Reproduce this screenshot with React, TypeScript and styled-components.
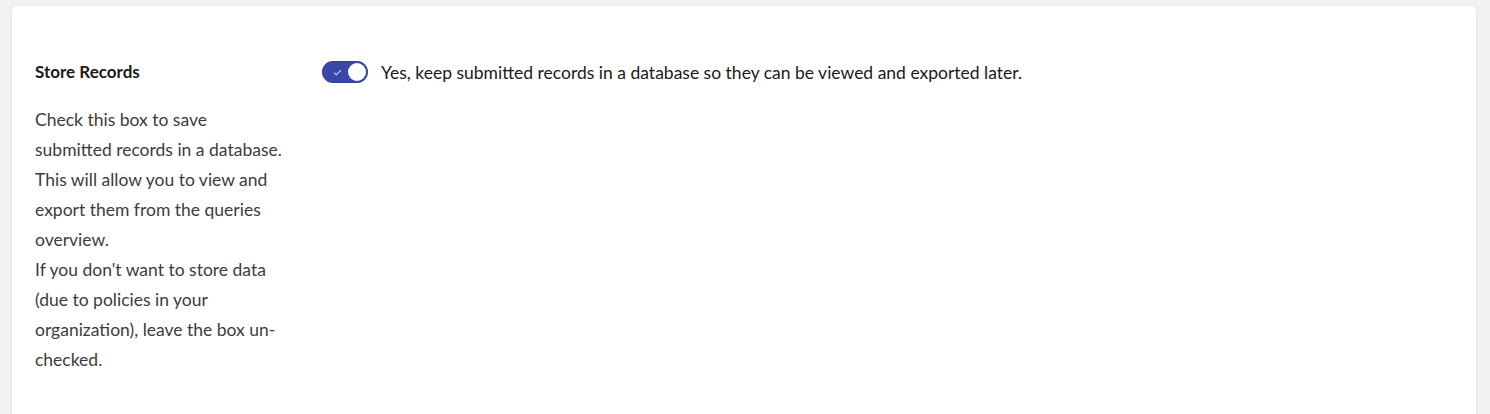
import React from 'react';
import styled, { createGlobalStyle } from 'styled-components';

const GlobalStyle = createGlobalStyle`
  body {
    margin: 0;
    background: #f1f1f4;
    font-family: Lato, "Open Sans", sans-serif;
  }
`;

function App() {
  const [checked, setChecked] = React.useState(true);

  return (
    <Page>
      <GlobalStyle />
      <Card>
        <SettingRow>
          <Info>
            <Label>Store Records</Label>
            <Help>
              Check this box to save submitted records in a database. This will allow you to view and export them
              from the queries overview.
              <br />
              If you don't want to store data (due to policies in your organization), leave the box un-checked.
            </Help>
          </Info>
          <Control>
            <Switch type="button" $on={checked} onClick={() => setChecked(!checked)} aria-pressed={checked}>
              <Check viewBox="0 0 10 8">
                <path d="M1 4.2 L3.6 6.6 L9 1.2" />
              </Check>
              <Knob $on={checked} />
            </Switch>
            <SwitchText>Yes, keep submitted records in a database so they can be viewed and exported later.</SwitchText>
          </Control>
        </SettingRow>
      </Card>
    </Page>
  );
}

const Page = styled.div`
  padding: 6px 14px 0 12px;
  height: 414px;
  box-sizing: border-box;
  overflow: hidden;
`;

const Card = styled.div`
  background: #fff;
  border-radius: 5px;
  box-shadow: 0 1px 3px rgba(0, 0, 0, 0.12);
  padding: 55px 23px 40px;
  min-height: 420px;
  box-sizing: border-box;
`;

const SettingRow = styled.div`
  display: grid;
  grid-template-columns: 249px 1fr;
  column-gap: 38px;
`;

const Info = styled.div`
  display: flex;
  flex-direction: column;
  gap: 22px;
`;

const Label = styled.div`
  font-size: 17px;
  font-weight: 700;
  line-height: 22px;
  color: #1a1a1a;
`;

const Help = styled.p`
  margin: 0;
  font-size: 17.5px;
  line-height: 30px;
  color: #3c3c3c;
`;

const Control = styled.div`
  display: flex;
  align-items: center;
  gap: 13px;
  height: 22px;
`;

const Switch = styled.button<{ $on: boolean }>`
  position: relative;
  flex: none;
  width: 46px;
  height: 22px;
  padding: 0;
  border: none;
  border-radius: 11px;
  background: ${(p) => (p.$on ? '#3a46a8' : '#c4c4cc')};
  box-shadow: inset 0 0 0 1px rgba(0, 0, 0, 0.08);
  cursor: pointer;
`;

const Check = styled.svg`
  position: absolute;
  left: 11px;
  top: 8px;
  width: 9px;
  height: 7px;
  fill: none;
  stroke: #c9cbe6;
  stroke-width: 1.3;
`;

const Knob = styled.span<{ $on: boolean }>`
  position: absolute;
  top: 2px;
  left: ${(p) => (p.$on ? '26px' : '2px')};
  width: 18px;
  height: 18px;
  border-radius: 50%;
  background: #fff;
`;

const SwitchText = styled.span`
  font-size: 17.5px;
  color: #1a1a1a;
  white-space: nowrap;
`;

export default App;
